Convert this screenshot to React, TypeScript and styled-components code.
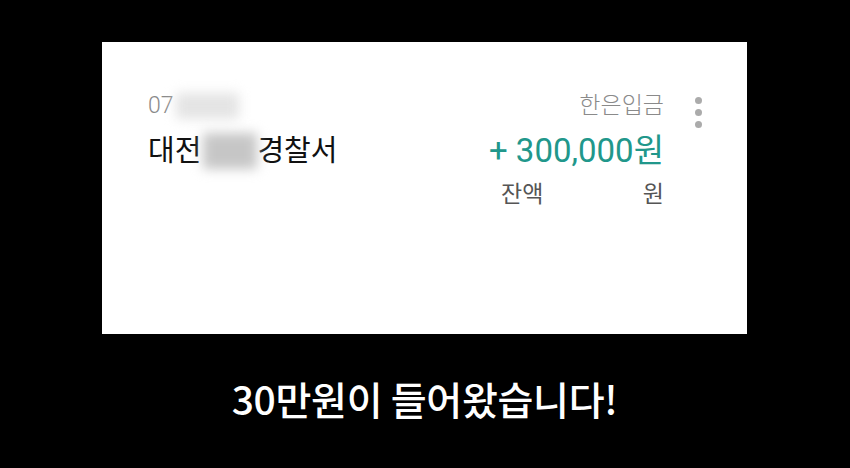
import styled, { createGlobalStyle } from "styled-components";

const GlobalStyle = createGlobalStyle`
  html, body {
    margin: 0;
    padding: 0;
    background: #000;
  }
  body {
    font-family: "Roboto", "Noto Sans CJK KR", sans-serif;
  }
`;

function App() {
  return (
    <Page>
      <GlobalStyle />
      <NotificationCard />
      <Caption>30만원이 들어왔습니다!</Caption>
    </Page>
  );
}

export default App;

const Page = styled.div`
  width: 850px;
  height: 468px;
  box-sizing: border-box;
  padding: 42px 0 0 102px;
  display: flex;
  flex-direction: column;
`;

const Caption = styled.div`
  width: 645px;
  margin-top: 40px;
  text-align: center;
  color: #fff;
  font-family: "Noto Sans CJK KR", sans-serif;
  font-weight: 500;
  font-size: 39px;
  line-height: 48px;
  letter-spacing: -0.3px;
`;

function NotificationCard() {
  return (
    <CardStyles>
      <Content>
        <Row>
          <SubText>
            07
            <Blur $w={63} $h={26} $tone="#e4e4e4" />
          </SubText>
          <SubText>한은입금</SubText>
        </Row>
        <Row $top={14}>
          <Sender>
            대전
            <Blur $w={54} $h={36} $tone="#c6c6c6" />
            경찰서
          </Sender>
          <Amount>+ 300,000원</Amount>
        </Row>
        <Row $top={13}>
          <span />
          <Balance>
            <span>잔액</span>
            <span>원</span>
          </Balance>
        </Row>
      </Content>
      <MoreButton aria-label="more">
        <Dot />
        <Dot />
        <Dot />
      </MoreButton>
    </CardStyles>
  );
}

const CardStyles = styled.div`
  width: 645px;
  height: 292px;
  box-sizing: border-box;
  background: #fff;
  padding: 51px 45px 0 46px;
  display: flex;
  align-items: flex-start;
`;

const Content = styled.div`
  flex: 1;
  display: flex;
  flex-direction: column;
`;

const Row = styled.div<{ $top?: number }>`
  display: flex;
  justify-content: space-between;
  align-items: center;
  margin-top: ${(p) => p.$top ?? 0}px;
`;

const SubText = styled.div`
  display: flex;
  align-items: center;
  color: #8a8a8a;
  font-size: 23px;
  font-weight: 300;
  line-height: 24px;
`;

const Sender = styled.div`
  display: flex;
  align-items: center;
  color: #111;
  font-size: 29px;
  line-height: 36px;
`;

const Blur = styled.span<{ $w: number; $h: number; $tone: string }>`
  display: inline-block;
  width: ${(p) => p.$w}px;
  height: ${(p) => p.$h}px;
  margin-left: 2px;
  background: ${(p) => p.$tone};
  filter: blur(6px);
`;

const Amount = styled.div`
  color: #21978b;
  font-size: 33px;
  line-height: 36px;
`;

const Balance = styled.div`
  width: 163px;
  display: flex;
  justify-content: space-between;
  color: #555;
  font-size: 23px;
  line-height: 26px;
`;

const MoreButton = styled.div`
  margin: 4px 0 0 31px;
  display: flex;
  flex-direction: column;
  gap: 5px;
`;

const Dot = styled.span`
  width: 7px;
  height: 7px;
  border-radius: 50%;
  background: #ababab;
`;
